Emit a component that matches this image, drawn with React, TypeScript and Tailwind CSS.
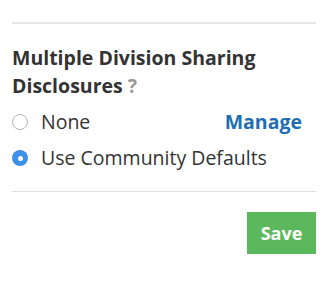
import React, { useState } from 'react'

const font = { fontFamily: '"Open Sans", "Liberation Sans", sans-serif' }

const Radio = ({ checked, label, onClick }: { checked: boolean; label: string; onClick: () => void }) => (
  <label className="flex items-center gap-[13px] cursor-pointer" onClick={onClick}>
    {checked ? (
      <span className="w-[16px] h-[16px] rounded-full bg-[#3d8fe8] flex items-center justify-center">
        <span className="w-[5px] h-[5px] rounded-full bg-white" />
      </span>
    ) : (
      <span className="w-[16px] h-[16px] rounded-full border border-[#b5b5b5] bg-white" />
    )}
    <span className="text-[19.5px] leading-[24px] text-[#333]">{label}</span>
  </label>
)

export default function App() {
  const [value, setValue] = useState('defaults')

  return (
    <div className="w-[336px] h-[295px] bg-white pl-3 pr-5 pt-[22px]" style={font}>
      <div className="border-t-2 border-[#e6e6e6]" />

      <h3 className="mt-[20px] text-[19.5px] leading-[28px] font-bold text-[#333]">
        Multiple Division Sharing Disclosures <span className="text-[#9a9a9a]">?</span>
      </h3>

      {/* OPTIONS */}
      <div className="flex flex-col gap-[12px] mt-[10px]">
        <div className="flex items-center justify-between">
          <Radio checked={value === 'none'} label="None" onClick={() => setValue('none')} />
          <a href="#" className="text-[19.5px] leading-[24px] font-bold text-[#1f6db3] mr-[14px]">Manage</a>
        </div>
        <Radio checked={value === 'defaults'} label="Use Community Defaults" onClick={() => setValue('defaults')} />
      </div>

      <div className="border-t border-[#e0e0e0] mt-[21px]" />

      <div className="flex justify-end mt-[20px]">
        <button className="w-[69px] h-[42px] bg-[#5cb85c] text-white font-bold text-[18px]">Save</button>
      </div>
    </div>
  )
}
